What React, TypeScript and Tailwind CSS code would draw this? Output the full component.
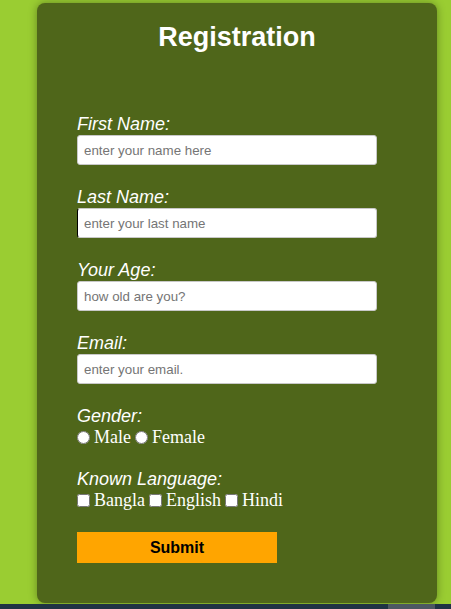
import React from "react";

const labelCls = "block italic text-[18px] leading-[21px] text-white";
const inputCls =
  "block w-[300px] h-[30px] rounded-[3px] border border-[#c8c8c8] bg-white px-[6px] text-[13.33px] text-black placeholder:text-[#757575] outline-none";

const serif = { fontFamily: '"Liberation Serif", "Times New Roman", serif' };

export default function App() {
  return (
    <div className="w-[451px] h-[609px] overflow-hidden bg-[#9acd32]" style={{ fontFamily: '"Liberation Sans", Arial, sans-serif' }}>
      <div className="pt-[3px] h-[604px]">
        <div className="ml-[37px] w-[400px] h-[600px] rounded-[8px] bg-[#4f661a] shadow-[0_0_8px_rgba(0,0,0,0.35)] px-[40px] pt-[19px]">
          <h2 className="text-center text-white font-bold text-[27px] leading-[30px]">Registration</h2>
          <div className="mt-[62px]">
            <label className={labelCls}>First Name:</label>
            <input className={inputCls} placeholder="enter your name here" />
            <label className={labelCls + " mt-[22px]"}>Last Name:</label>
            <input className={inputCls + " border-l-black"} placeholder="enter your last name" />
            <label className={labelCls + " mt-[22px]"}>Your Age:</label>
            <input className={inputCls} placeholder="how old are you?" />
            <label className={labelCls + " mt-[22px]"}>Email:</label>
            <input className={inputCls} placeholder="enter your email." />
            <label className={labelCls + " mt-[22px]"}>Gender:</label>
            <div className="flex items-center text-white text-[18px] leading-[21px]" style={serif}>
              <input type="radio" name="g" className="w-[13px] h-[13px] mr-[4px]" />
              <span>Male</span>
              <input type="radio" name="g" className="w-[13px] h-[13px] ml-[4px] mr-[4px]" />
              <span>Female</span>
            </div>
            <label className={labelCls + " mt-[21px]"}>Known Language:</label>
            <div className="flex items-center text-white text-[18px] leading-[21px]" style={serif}>
              <input type="checkbox" className="w-[13px] h-[13px] mr-[4px]" />
              <span>Bangla</span>
              <input type="checkbox" className="w-[13px] h-[13px] ml-[4px] mr-[4px]" />
              <span>English</span>
              <input type="checkbox" className="w-[13px] h-[13px] ml-[4px] mr-[4px]" />
              <span>Hindi</span>
            </div>
            <button className="mt-[21px] block w-[200px] h-[31px] bg-[#ffa500] text-black font-bold text-[16px]">Submit</button>
          </div>
        </div>
      </div>
      <div className="flex h-[5px] bg-[#1f3344]">
        <div className="ml-[388px] w-[47px] bg-[#4c5862]" />
      </div>
    </div>
  );
}
